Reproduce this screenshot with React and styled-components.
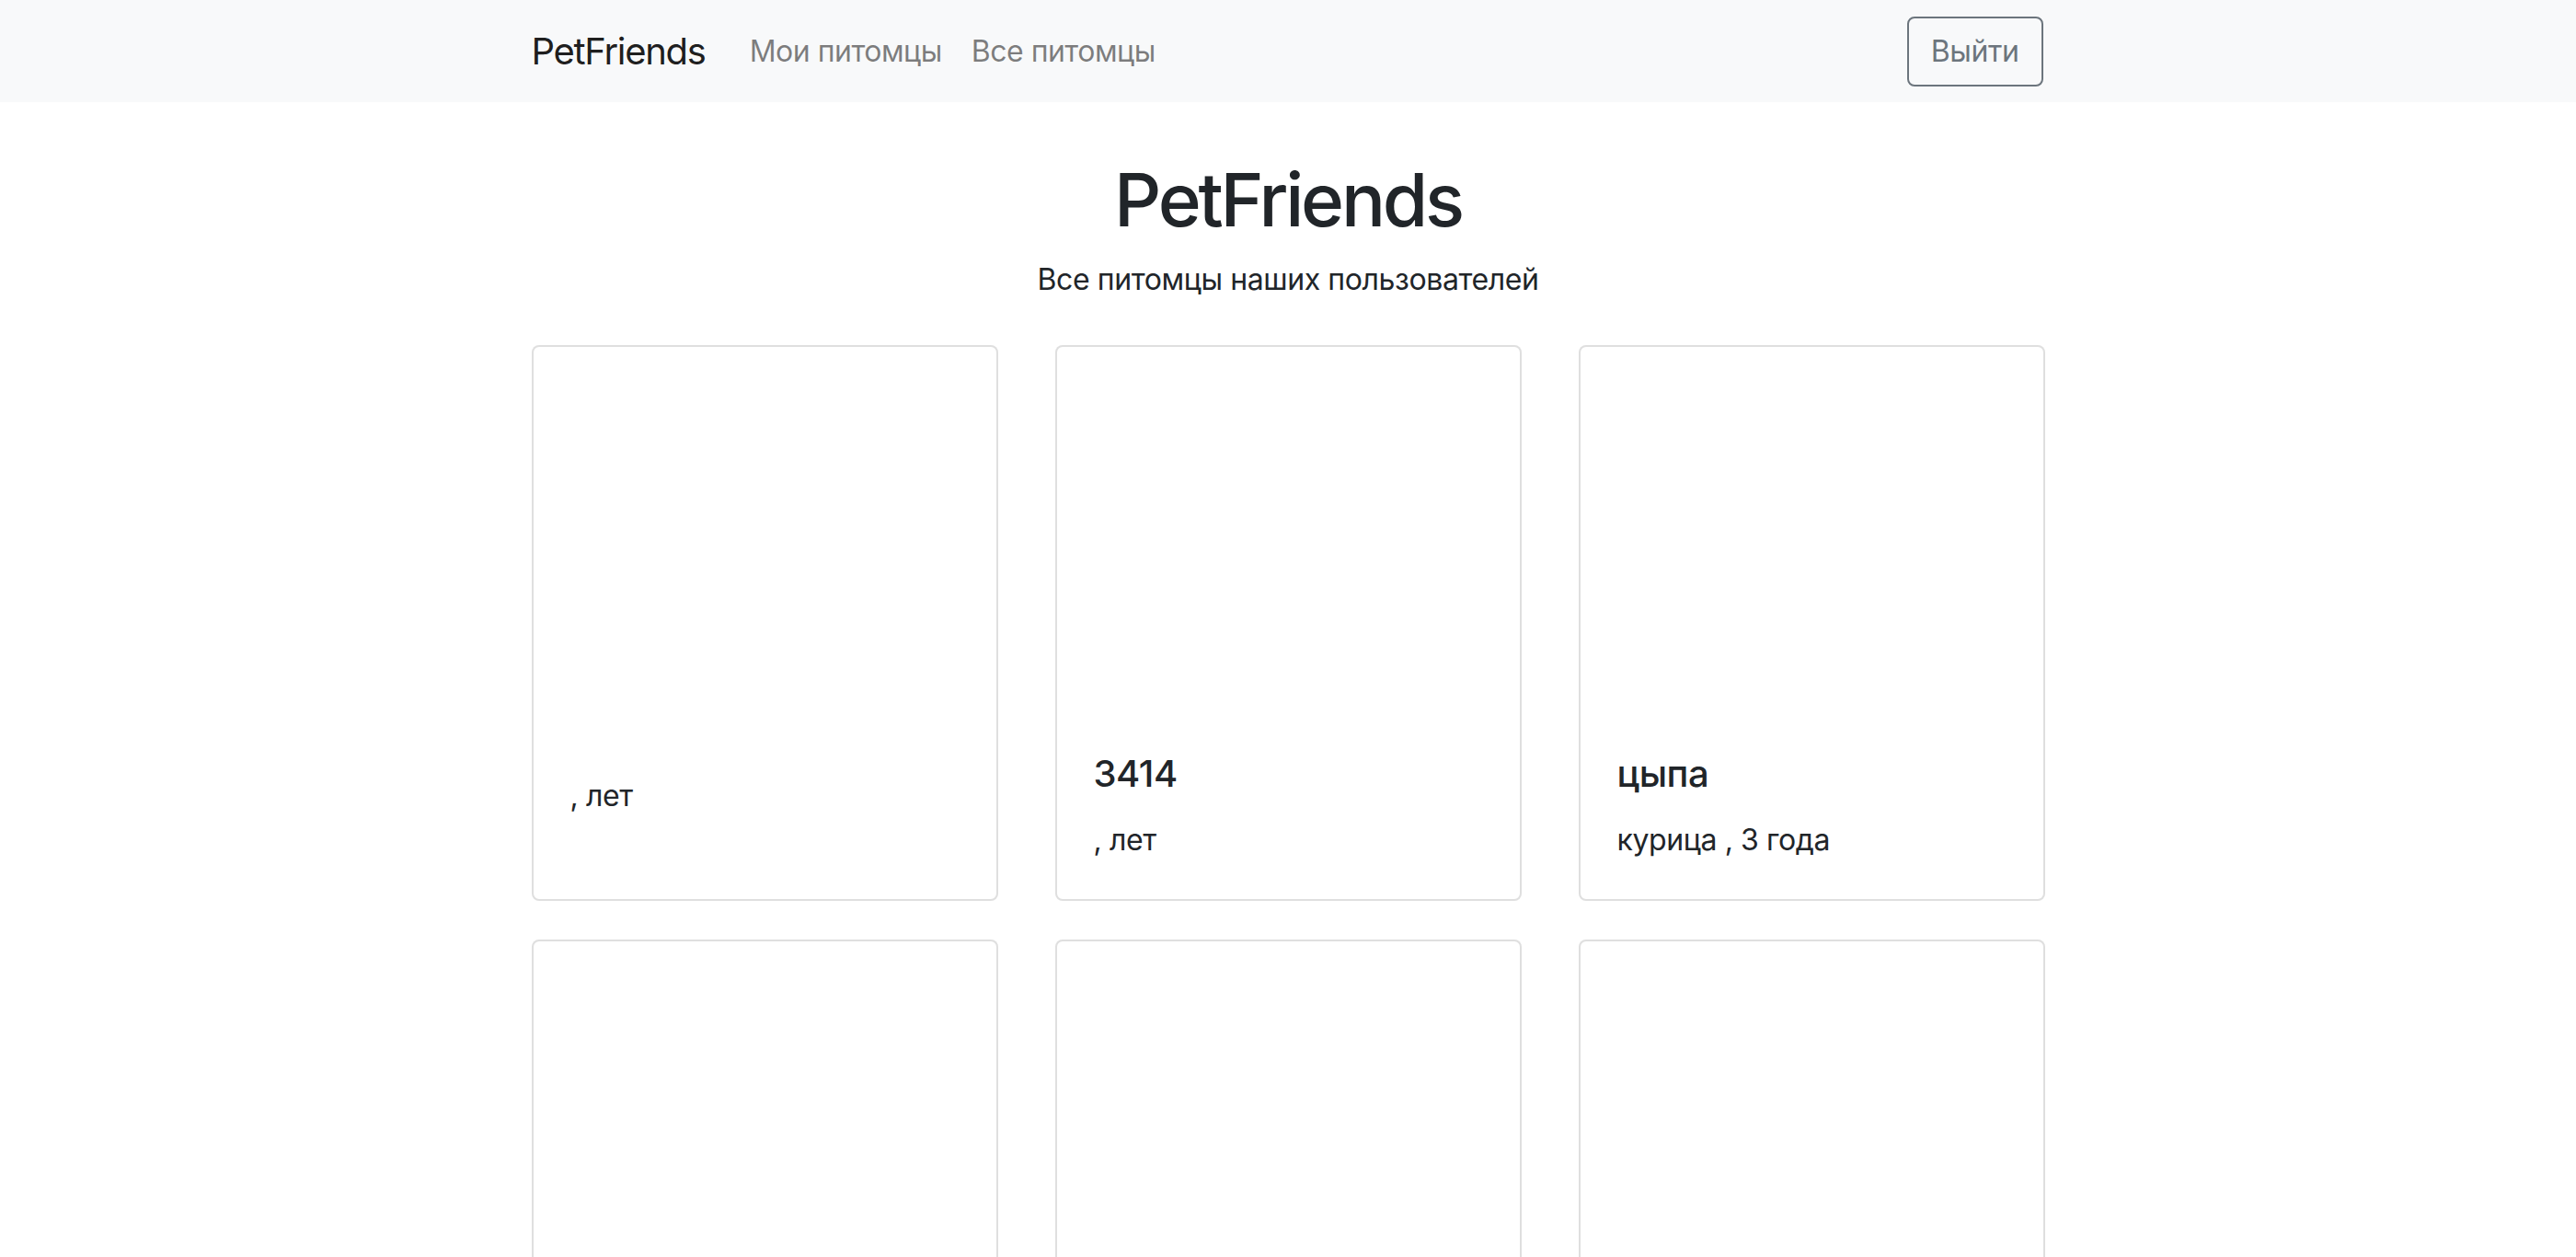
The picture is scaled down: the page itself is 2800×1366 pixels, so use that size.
import React from 'react';
import styled, { createGlobalStyle } from 'styled-components';

// the lower row runs past the fold, only the photo area shows
const pets = [
  { id: 1, name: '', type: '', age: '', unit: 'лет' },
  { id: 2, name: '3414', type: '', age: '', unit: 'лет' },
  { id: 3, name: 'цыпа', type: 'курица', age: '3', unit: 'года' },
  { id: 4 },
  { id: 5 },
  { id: 6 },
];

class App extends React.Component {
  render() {
    return (
      <>
        <GlobalStyle />
        <Navbar>
          <NavInner>
            <Brand href="#">PetFriends</Brand>
            <NavLinks>
              <NavLink href="#">Мои питомцы</NavLink>
              <NavLink href="#">Все питомцы</NavLink>
            </NavLinks>
            <LogoutButton type="button">Выйти</LogoutButton>
          </NavInner>
        </Navbar>
        <Main>
          <Title>PetFriends</Title>
          <Lead>Все питомцы наших пользователей</Lead>
          <CardGrid>
            {pets.map((pet) => (
              <Card key={pet.id}>
                <CardImage />
                {pet.unit ?
                <CardBody>
                  <CardTitle>{pet.name}</CardTitle>
                  <CardText>
                    {pet.type} , {pet.age ? pet.age + ' ' : ''}{pet.unit}
                  </CardText>
                </CardBody>
                : null}
              </Card>
            ))}
          </CardGrid>
        </Main>
      </>
    );
  }
}
export default App;

const GlobalStyle = createGlobalStyle`
body {
  margin: 0;
  background: #fff;
  color: #212529;
  font-family: Inter, "Noto Sans", sans-serif;
  font-size: 32px;
  line-height: 1.5;
}
* { box-sizing: border-box; }
`;

const Navbar = styled.nav`
background-color: #f8f9fa;
height: 111px;
`;

const NavInner = styled.div`
width: 1645px;
height: 100%;
margin: 0 auto;
display: flex;
align-items: center;
`;

const Brand = styled.a`
font-size: 40px;
line-height: 60px;
color: rgba(0, 0, 0, 0.9);
text-decoration: none;
margin-right: 32px;
letter-spacing: -1.3px;
`;

const NavLinks = styled.div`
display: flex;
flex: 1;
`;

const NavLink = styled.a`
padding: 0 16px;
font-size: 32px;
line-height: 48px;
color: rgba(0, 0, 0, 0.5);
text-decoration: none;
letter-spacing: -0.5px;
`;

const LogoutButton = styled.button`
font-family: inherit;
font-size: 32px;
line-height: 48px;
padding: 12px 24px;
color: #6c757d;
background: transparent;
border: 2px solid #6c757d;
border-radius: 8px;
margin-right: 2px;
letter-spacing: -0.4px;
`;

const Main = styled.main`
width: 1645px;
margin: 0 auto;
padding-top: 58px;
text-align: center;
`;

const Title = styled.h1`
margin: 0 0 15px;
font-size: 80px;
line-height: 96px;
font-weight: 500;
letter-spacing: -3.2px;
`;

const Lead = styled.p`
margin: 0 0 47px;
font-size: 32px;
line-height: 48px;
letter-spacing: -0.4px;
`;

const CardGrid = styled.div`
display: grid;
grid-template-columns: repeat(3, 507px);
column-gap: 62px;
row-gap: 42px;
text-align: left;
`;

const Card = styled.div`
display: flex;
flex-direction: column;
border: 2px solid rgba(0, 0, 0, 0.125);
border-radius: 8px;
background: #fff;
`;

const CardImage = styled.div`
height: 400px;
`;

const CardBody = styled.div`
padding: 40px;
`;

const CardTitle = styled.h5`
margin: 0 0 24px;
font-size: 40px;
line-height: 48px;
font-weight: 500;
letter-spacing: -0.5px;
`;

const CardText = styled.p`
margin: 0;
font-size: 32px;
line-height: 48px;
letter-spacing: -0.4px;
`;
